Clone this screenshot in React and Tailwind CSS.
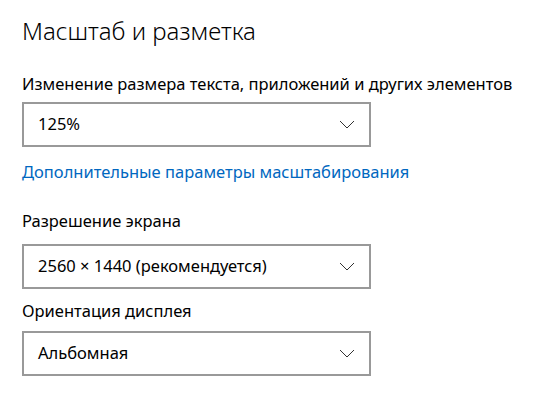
import React from 'react';

const font = { fontFamily: '"Noto Sans", "Open Sans", sans-serif' };

const Chevron = () => (
  <svg width="16" height="9" viewBox="0 0 16 9" fill="none" className="shrink-0">
    <path d="M1 1l7 7 7-7" stroke="#333" strokeWidth="1" />
  </svg>
);

const Select = ({ value }) => (
  <div className="flex h-[45px] w-[349px] items-center justify-between border-2 border-[#999] bg-white pl-[14px] pr-[14px]">
    <span className="text-[16.5px] text-black">{value}</span>
    <Chevron />
  </div>
);

export default function App() {
  return (
    <div className="h-[409px] w-[548px] bg-white px-[22px] pt-[14px]" style={font}>
      <h1 className="text-[24px] font-light leading-[34px] text-black">Масштаб и разметка</h1>

      <div className="mt-[26px] text-[16.5px] leading-[20px] text-black">
        Изменение размера текста, приложений и других элементов
      </div>
      <div className="mt-[8px]">
        <Select value="125%" />
      </div>

      <a className="mt-[15px] block text-[16.5px] leading-[20px] text-[#0067c0]">
        Дополнительные параметры масштабирования
      </a>

      <div className="mt-[29px] text-[16.5px] leading-[20px] text-black">Разрешение экрана</div>
      <div className="mt-[13px]">
        <Select value="2560 × 1440 (рекомендуется)" />
      </div>

      <div className="mt-[12px] text-[16.5px] leading-[20px] text-black">Ориентация дисплея</div>
      <div className="mt-[10px]">
        <Select value="Альбомная" />
      </div>
    </div>
  );
}
